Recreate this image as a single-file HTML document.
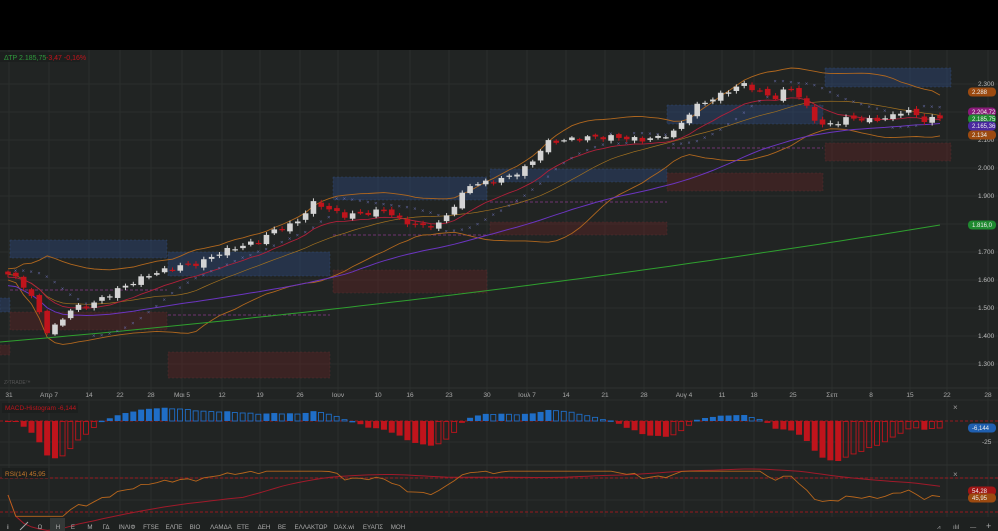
<!DOCTYPE html>
<html><head><meta charset="utf-8"><style>
html,body{margin:0;padding:0;background:#000;width:998px;height:531px;overflow:hidden}
svg{display:block}
text{font-family:"Liberation Sans","DejaVu Sans",sans-serif}
</style></head><body>
<svg id="s" width="998" height="531" xmlns="http://www.w3.org/2000/svg">
<rect x="0" y="0" width="998" height="50" fill="#000"/>
<rect x="0" y="50" width="998" height="481" fill="#212423"/>
<g id="grid"></g>
<g id="zones"></g>
<g id="lines"></g>
<g id="candles"></g>
<g id="ind"></g>
<rect x="0" y="52" width="80" height="10" fill="#1c1f1e"/>
<text x="4" y="60" font-size="7" fill="#2f9a3c">ΔΤΡ 2.185,75</text>
<text x="46" y="60" font-size="7" fill="#c0141c">-3,47 -0,16%</text>
<text x="4" y="384" font-size="5" fill="#555">Z²TRADE™</text>
<g font-size="6.5" fill="#aaa" text-anchor="middle" id="dates"></g>
<g font-size="6.5" fill="#bbb" id="plabels"></g>
<rect x="2" y="403" width="76" height="10" fill="#1c1f1e"/>
<text x="5" y="410" font-size="6.5" fill="#c0141c">MACD-Histogram -6,144</text>
<rect x="2" y="468" width="46" height="10" fill="#1c1f1e"/>
<text x="5" y="476" font-size="6.5" fill="#c77a2a">RSI(14) 45,95</text>
<text x="953" y="410" font-size="8" fill="#999">×</text>
<text x="953" y="477" font-size="8" fill="#999">×</text>
<g font-size="6.2" fill="#aaa" id="tb"></g>
</svg>
<script>
const NS="http://www.w3.org/2000/svg";
function el(p,t,a,txt){const e=document.createElementNS(NS,t);for(const k in a)e.setAttribute(k,a[k]);if(txt!=null)e.textContent=txt;document.getElementById(p).appendChild(e);return e;}
const py=p=>196-(p-1900)*0.28;
const vx=[9,49,89,120,151,182,222,260,300,338,378,410,449,487,527,566,605,644,684,722,754,793,832,871,910,947,988];
for(const x of vx) el("grid","line",{x1:x,y1:50,x2:x,y2:520,stroke:"#2a2e2d","stroke-width":1});
for(let p=1300;p<=2300;p+=100){el("grid","line",{x1:0,y1:py(p),x2:998,y2:py(p),stroke:"#2a2e2d"});}
for(const y of [400,442,465,478,500]) el("grid","line",{x1:0,y1:y,x2:998,y2:y,stroke:"#2a2e2d"});
el("grid","line",{x1:0,y1:388,x2:998,y2:388,stroke:"#2e3231"});
el("grid","line",{x1:0,y1:465,x2:998,y2:465,stroke:"#2e3231"});
el("grid","rect",{x:0,y:517,width:998,height:14,fill:"#1e2120"});
const B="rgba(45,70,120,0.45)",R="rgba(90,35,35,0.45)";
const Z=[[10,240,157,18,B],[0,298,10,14,B],[168,252,162,24,B],[333,177,154,23,B],[490,169,177,13,B],[667,105,156,19,B],[825,68,126,19,B],
[0,345,10,10,R],[10,312,157,18,R],[168,352,162,26,R],[333,270,154,23,R],[490,222,177,13,R],[667,173,156,18,R],[825,143,126,18,R]];
for(const z of Z){el("zones","rect",{x:z[0],y:z[1],width:z[2],height:z[3],fill:z[4],stroke:z[4]==B?"#3a5a90":"#6a3535","stroke-dasharray":"2,2","stroke-width":0.5,"stroke-opacity":0.6});}
for(const d of [[168,330,315],[333,487,235],[490,667,202],[667,823,148],[10,167,290]]) el("zones","line",{x1:d[0],x2:d[1],y1:d[2],y2:d[2],stroke:"#8a3a8a","stroke-dasharray":"3,2","stroke-width":0.8});
const wp=[[8,1620],[20,1600],[35,1520],[48,1410],[60,1450],[72,1500],[90,1510],[120,1570],[150,1620],[180,1650],[200,1660],[215,1690],[230,1710],[260,1740],[275,1780],[295,1800],[315,1880],[330,1850],[345,1830],[370,1840],[385,1850],[400,1815],[420,1790],[440,1800],[455,1870],[470,1940],[490,1950],[510,1970],[530,2010],[545,2090],[565,2100],[590,2110],[620,2110],[640,2100],[660,2110],[675,2130],[690,2200],[700,2230],[715,2250],[730,2280],[745,2300],[760,2270],[775,2250],[790,2290],[800,2250],[810,2200],[820,2150],[835,2160],[850,2180],[870,2170],[890,2180],[905,2210],[915,2190],[925,2170],[940,2180]];
function interp(x){for(let i=0;i<wp.length-1;i++){if(x<=wp[i+1][0]){const t=(x-wp[i][0])/(wp[i+1][0]-wp[i][0]);return wp[i][1]+t*(wp[i+1][1]-wp[i][1]);}}return wp[wp.length-1][1];}
const N=120,xs=[],C=[],O=[],H=[],L=[];
for(let i=0;i<N;i++){const x=8+i*(932/(N-1));xs.push(x);const c=interp(x)+8*Math.sin(i*2.3);C.push(c);}
for(let i=0;i<N;i++){const o=i?C[i-1]+6*Math.sin(i*1.7):C[i]+10;O.push(o);H.push(Math.max(o,C[i])+4+6*Math.abs(Math.sin(i*3.1)));L.push(Math.min(o,C[i])-4-6*Math.abs(Math.cos(i*2.9)));}
for(let i=0;i<N;i++){const up=C[i]>=O[i];const col=up?"#d4d4d4":"#c0141c";
el("candles","line",{x1:xs[i],x2:xs[i],y1:py(H[i]),y2:py(L[i]),stroke:col,"stroke-width":1});
const y1=py(Math.max(O[i],C[i])),y2=py(Math.min(O[i],C[i]));el("candles","rect",{x:xs[i]-2.8,y:y1,width:5.6,height:Math.max(1.2,y2-y1),fill:col});}
function sma(a,n,i){let s=0,k=0;for(let j=Math.max(0,i-n+1);j<=i;j++){s+=a[j];k++;}return s/k;}
function path(pts){return pts.map((p,i)=>(i?"L":"M")+p[0].toFixed(1)+" "+p[1].toFixed(1)).join("");}
const ub=[],lb=[],mid=[],ema=[],ma50=[];let e=C[0];
for(let i=0;i<N;i++){const m=sma(C,20,i);let v=0,k=0;for(let j=Math.max(0,i-19);j<=i;j++){v+=(C[j]-m)**2;k++;}const sd=Math.sqrt(v/k)*0.85+10;
ub.push([xs[i],py(m+2*sd)]);lb.push([xs[i],py(m-2*sd)]);mid.push([xs[i],py(m)]);e=e+(C[i]-e)*2/11;ema.push([xs[i],py(e-10)]);ma50.push([xs[i],py(sma(C,40,i)-40)]);}
el("lines","path",{d:path(ub),stroke:"#b0671e",fill:"none","stroke-width":0.9});
el("lines","path",{d:path(lb),stroke:"#b0671e",fill:"none","stroke-width":0.9});
el("lines","path",{d:path(mid),stroke:"#a07020",fill:"none","stroke-width":0.7});
el("lines","path",{d:path(ema),stroke:"#b0203a",fill:"none","stroke-width":0.9});
el("lines","path",{d:path(ma50),stroke:"#6b35c0",fill:"none","stroke-width":1});
const g=[];for(let x=0;x<=940;x+=10){const t=x/940;g.push([x,342-80*t-37*t*t]);}
el("lines","path",{d:path(g),stroke:"#2fa02f",fill:"none","stroke-width":1});
let trend=1,sar=L[0],ep=H[0],af=0.02;
for(let i=1;i<N;i++){sar=sar+af*(ep-sar);
if(trend==1){if(L[i]<sar){trend=-1;sar=ep;ep=L[i];af=0.02;}else if(H[i]>ep){ep=H[i];af=Math.min(0.2,af+0.02);}}
else{if(H[i]>sar){trend=1;sar=ep;ep=H[i];af=0.02;}else if(L[i]<ep){ep=L[i];af=Math.min(0.2,af+0.02);}}
el("lines","text",{x:xs[i]-2,y:py(sar)+2,"font-size":5.5,fill:"#6a6fb0"},"×");}
const dl=["31","Απρ 7","14","22","28","Μαι 5","12","19","26","Ιουν","10","16","23","30","Ιουλ 7","14","21","28","Αυγ 4","11","18","25","Σεπ","8","15","22","28"];
vx.forEach((x,i)=>el("dates","text",{x:x,y:397},dl[i]));
for(const p of [2300,2100,2000,1900,1800,1700,1600,1500,1400,1300]) el("plabels","text",{x:978,y:py(p)+2},(p/1000).toFixed(3));
const badges=[[92,"#9c4a10","2.288"],[112,"#8a1a7a","2.204,72"],[119,"#1f8a30","2.185,75"],[126,"#4a28a0","2.165,36"],[135,"#9c4a10","2.134"],[225,"#1f8a30","1.816,0"],[428,"#1f5fb0","-6,144"],[491,"#a01515","54,28"],[498,"#9c4a10","45,95"]];
for(const b of badges){el("plabels","rect",{x:968,y:b[0]-4.5,width:28,height:9,rx:4,fill:b[1]});el("plabels","text",{x:972,y:b[0]+2,fill:"#eee","font-size":6},b[2]);}
el("plabels","text",{x:982,y:444},"-25");
function emaArr(a,n){const r=[];let v=a[0];for(const x of a){v+=(x-v)*2/(n+1);r.push(v);}return r;}
const e12=emaArr(C,12),e26=emaArr(C,26),macd=e12.map((v,i)=>v-e26[i]),sig=emaArr(macd,9),hist=macd.map((v,i)=>v-sig[i]);
const mx=Math.max(...hist.map(Math.abs));
el("ind","line",{x1:0,x2:998,y1:421,y2:421,stroke:"#c0141c","stroke-dasharray":"3,2","stroke-width":0.7});
for(let i=0;i<N;i++){const h=hist[i]/mx*(hist[i]<0?40:18);const col=h>0?"#1f6ec7":"#c0141c";const dec=i&&Math.abs(hist[i])<Math.abs(hist[i-1]);
const y=h>0?421-h:421;const hh=Math.max(1,Math.abs(h));
if(dec)el("ind","rect",{x:xs[i]-2.8,y:y+0.5,width:5,height:hh-0.5,fill:"none",stroke:col,"stroke-width":0.9});else el("ind","rect",{x:xs[i]-3,y:y,width:6,height:hh,fill:col});}
el("ind","line",{x1:0,x2:998,y1:478,y2:478,stroke:"#c0141c","stroke-dasharray":"3,2","stroke-width":0.8});
el("ind","line",{x1:0,x2:998,y1:512,y2:512,stroke:"#c0141c","stroke-dasharray":"3,2","stroke-width":0.8});
let ag=0,al=0;const rsi=[];for(let i=0;i<N;i++){const d=i?C[i]-C[i-1]:0;ag=(ag*13+Math.max(d,0))/14;al=(al*13+Math.max(-d,0))/14;rsi.push(al==0?50:100-100/(1+ag/al));}
const ry=v=>512-(v-30)/40*34;
const rp=rsi.map((v,i)=>[xs[i],ry(Math.max(25,Math.min(78,v)))]);
const rm=rsi.map((v,i)=>[xs[i],ry(sma(rsi,30,i))]);
el("ind","path",{d:path(rm),stroke:"#a01a2a",fill:"none","stroke-width":1});
el("ind","path",{d:path(rp),stroke:"#b8661c",fill:"none","stroke-width":0.9});
const tb=["Ω","Η","Ε","Μ","ΓΔ","ΙΝΛΙΦ","FTSE","ΕΛΠΕ","ΒΙΟ","ΛΑΜΔΑ","ΕΤΕ","ΔΕΗ","ΒΕ","ΕΛΛΑΚΤΩΡ","DAX.wi","ΕΥΑΠΣ","ΜΟΗ"];
const tx=[40,58,73,90,106,127,151,174,195,221,243,264,282,311,344,373,398];
el("tb","rect",{x:50,y:518,width:15,height:13,fill:"#343837"});
tb.forEach((t,i)=>el("tb","text",{x:tx[i],y:529,"text-anchor":"middle"},t));
el("tb","text",{x:7,y:529,"font-weight":"bold"},"i");
el("tb","line",{x1:20,y1:530,x2:28,y2:522,stroke:"#aaa"});
el("tb","text",{x:937,y:529},"⩘");el("tb","text",{x:953,y:529},"ılıl");el("tb","text",{x:970,y:529},"—");el("tb","text",{x:986,y:529,"font-size":9},"+");
</script>
</body></html>
